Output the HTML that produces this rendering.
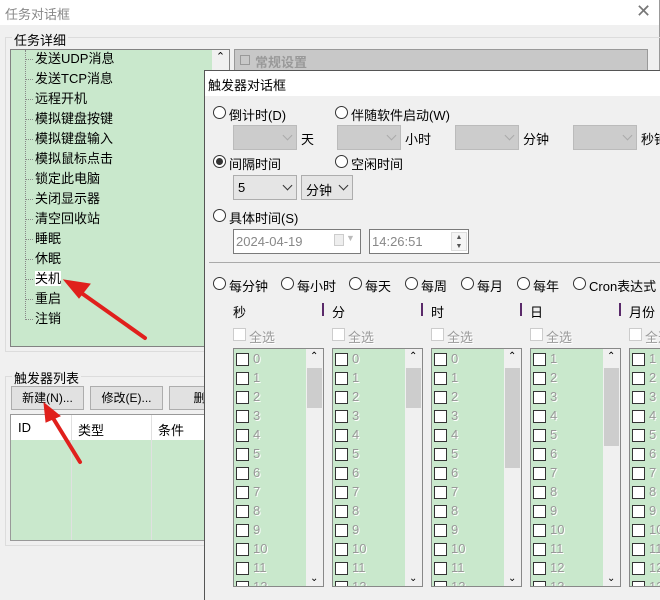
<!DOCTYPE html>
<html><head><meta charset="utf-8"><style>
*{margin:0;padding:0;box-sizing:border-box}
body{width:660px;height:595px;overflow:hidden;background:#f0f0f0;font-family:"Liberation Sans","Noto Sans CJK SC",sans-serif;font-size:12px;color:#000;position:relative}
.a{position:absolute;white-space:nowrap}
.rb{position:absolute;width:13px;height:13px;border:1px solid #333;border-radius:50%;background:#fff}
.rb.on::after{content:"";position:absolute;left:2px;top:2px;width:7px;height:7px;border-radius:50%;background:#333}
.cb{position:absolute;width:13px;height:13px;border:1px solid #333;background:#fff}
.cbd{position:absolute;width:13px;height:13px;border:1px solid #ccc;background:#fff}
.combo{position:absolute;height:25px;border:1px solid #bbb;background:#ccc}
.combo.e{background:#e5e5e5;border-color:#adadad}
.chev{position:absolute;right:5px;top:6px;width:7px;height:7px;border-right:1.3px solid #333;border-bottom:1.3px solid #333;transform:rotate(45deg)}
.combo .chev{border-color:#aaa}
.combo.e .chev{border-color:#333}
.dis{color:#999;text-shadow:1px 1px 0 #fff}
.btn{position:absolute;height:24px;border:1px solid #adadad;background:#e1e1e1;text-align:center;line-height:22px}
.list{position:absolute;top:348px;width:91px;height:239px;border:1px solid #888;background:#c9e8cc;overflow:hidden}
.sb{position:absolute;right:0;top:0;width:17px;height:100%;background:#f0f0f0}
.th{position:absolute;left:1px;width:15px;top:19px;background:#cdcdcd}
.tree div{height:20px;line-height:20px;position:relative;padding-left:35px}
.tree div::before{content:"";position:absolute;left:26px;top:10px;width:7px;border-top:1px dotted #888}
</style></head><body>
<div class="a" style="left:0;top:0;width:660px;height:25px;background:#fff"></div>
<div class="a" style="left:5px;top:4px;color:#888;font-size:13px">任务对话框</div>
<div class="a" style="left:636px;top:1px;color:#777;font-size:18px">✕</div>
<div class="a" style="left:659px;top:0;width:1px;height:595px;background:#999"></div>
<div class="a" style="left:5px;top:37px;width:660px;height:315px;border:1px solid #dcdcdc"></div>
<div class="a" style="left:12px;top:30px;background:#f0f0f0;padding:0 2px;font-size:13px">任务详细</div>
<div class="a" style="left:10px;top:49px;width:220px;height:298px;border:1px solid #828282;background:#c9e8cc"></div>
<div class="a" style="left:212px;top:50px;width:17px;height:20px;background:#f0f0f0;text-align:center;font-size:11px">⌃</div>
<div class="a" style="left:25px;top:50px;width:1px;height:270px;border-left:1px dotted #888"></div>
<div class="a tree" style="left:0;top:49px;font-size:13px">
<div>发送UDP消息</div><div>发送TCP消息</div><div>远程开机</div><div>模拟键盘按键</div><div>模拟键盘输入</div><div>模拟鼠标点击</div><div>锁定此电脑</div><div>关闭显示器</div><div>清空回收站</div><div>睡眠</div><div>休眠</div><div><span style="background:#fff">关机</span></div><div>重启</div><div>注销</div></div>
<div class="a" style="left:234px;top:49px;width:414px;height:22px;border:1px solid #999;background:#c8c8c8"></div>
<div class="a" style="left:240px;top:55px;width:10px;height:10px;border:1px solid #999"></div>
<div class="a" style="left:255px;top:52px;color:#999;font-weight:bold;font-size:13px">常规设置</div>
<div class="a" style="left:5px;top:376px;width:210px;height:170px;border:1px solid #dcdcdc"></div>
<div class="a" style="left:12px;top:368px;background:#f0f0f0;padding:0 2px;font-size:13px">触发器列表</div>
<div class="btn" style="left:11px;top:386px;width:73px">新建(N)...</div>
<div class="btn" style="left:90px;top:386px;width:73px">修改(E)...</div>
<div class="btn" style="left:169px;top:386px;width:73px">删除</div>
<div class="a" style="left:10px;top:414px;width:200px;height:127px;border:1px solid #999;background:#c9e8cc"></div>
<div class="a" style="left:11px;top:415px;width:198px;height:25px;background:#fff"></div>
<div class="a" style="left:71px;top:415px;width:1px;height:125px;background:#e0e0e0"></div>
<div class="a" style="left:151px;top:415px;width:1px;height:125px;background:#e0e0e0"></div>
<div class="a" style="left:18px;top:420px;font-size:13px">ID</div>
<div class="a" style="left:78px;top:420px;font-size:13px">类型</div>
<div class="a" style="left:158px;top:420px;font-size:13px">条件</div>
<div class="a" style="left:204px;top:70px;width:460px;height:530px;background:#f0f0f0;border-left:1px solid #555;border-top:1px solid #555"></div>
<div class="a" style="left:205px;top:71px;width:455px;height:25px;background:#fff"></div>
<div class="a" style="left:208px;top:75px;font-size:13px">触发器对话框</div>
<div class="rb" style="left:213px;top:106px"></div><div class="a" style="left:229px;top:105px;font-size:13px">倒计时(D)</div>
<div class="rb" style="left:335px;top:106px"></div><div class="a" style="left:351px;top:105px;font-size:13px">伴随软件启动(W)</div>
<div class="combo" style="left:233px;top:125px;width:64px"><i class="chev"></i></div><div class="a" style="left:301px;top:129px;font-size:13px">天</div>
<div class="combo" style="left:337px;top:125px;width:64px"><i class="chev"></i></div><div class="a" style="left:405px;top:129px;font-size:13px">小时</div>
<div class="combo" style="left:455px;top:125px;width:64px"><i class="chev"></i></div><div class="a" style="left:523px;top:129px;font-size:13px">分钟</div>
<div class="combo" style="left:573px;top:125px;width:64px"><i class="chev"></i></div><div class="a" style="left:641px;top:129px;font-size:13px">秒钟</div>
<div class="rb on" style="left:213px;top:155px"></div><div class="a" style="left:229px;top:154px;font-size:13px">间隔时间</div>
<div class="rb" style="left:335px;top:155px"></div><div class="a" style="left:351px;top:154px;font-size:13px">空闲时间</div>
<div class="combo e" style="left:233px;top:175px;width:64px"><span class="a" style="left:4px;top:4px;font-size:13px">5</span><i class="chev"></i></div>
<div class="combo e" style="left:301px;top:175px;width:52px"><span class="a" style="left:4px;top:4px;font-size:13px">分钟</span><i class="chev"></i></div>
<div class="rb" style="left:213px;top:209px"></div><div class="a" style="left:229px;top:208px;font-size:13px">具体时间(S)</div>
<div class="a" style="left:233px;top:229px;width:128px;height:25px;border:1px solid #7a7a7a;background:#fff"><span class="a" style="left:2px;top:4px;color:#888;font-size:13px">2024-04-19</span><span class="a" style="left:100px;top:4px;width:10px;height:12px;border:1px solid #ccc;background:#eee"></span><span class="a" style="left:112px;top:3px;color:#bbb;font-size:9px">▼</span></div>
<div class="a" style="left:369px;top:229px;width:100px;height:25px;border:1px solid #7a7a7a;background:#fff"><span class="a" style="left:2px;top:4px;color:#888;font-size:13px">14:26:51</span><span class="a" style="left:81px;top:2px;width:16px;height:19px;border:1px solid #ddd;background:#f5f5f5;font-size:7px;color:#555;text-align:center;line-height:9px">▲<br>▼</span></div>
<div class="a" style="left:209px;top:262px;width:451px;height:1px;background:#aaa"></div>
<div class="rb" style="left:213px;top:277px"></div><div class="a" style="left:229px;top:276px;font-size:13px">每分钟</div>
<div class="rb" style="left:281px;top:277px"></div><div class="a" style="left:297px;top:276px;font-size:13px">每小时</div>
<div class="rb" style="left:349px;top:277px"></div><div class="a" style="left:365px;top:276px;font-size:13px">每天</div>
<div class="rb" style="left:405px;top:277px"></div><div class="a" style="left:421px;top:276px;font-size:13px">每周</div>
<div class="rb" style="left:461px;top:277px"></div><div class="a" style="left:477px;top:276px;font-size:13px">每月</div>
<div class="rb" style="left:517px;top:277px"></div><div class="a" style="left:533px;top:276px;font-size:13px">每年</div>
<div class="rb" style="left:573px;top:277px"></div><div class="a" style="left:589px;top:276px;font-size:13px">Cron表达式</div>
<div class="a" style="left:233px;top:302px;font-size:13px">秒</div>
<div class="a" style="left:322px;top:303px;width:2px;height:13px;background:#5a2a6a"></div><div class="a" style="left:332px;top:302px;font-size:13px">分</div>
<div class="a" style="left:421px;top:303px;width:2px;height:13px;background:#5a2a6a"></div><div class="a" style="left:431px;top:302px;font-size:13px">时</div>
<div class="a" style="left:520px;top:303px;width:2px;height:13px;background:#5a2a6a"></div><div class="a" style="left:530px;top:302px;font-size:13px">日</div>
<div class="a" style="left:619px;top:303px;width:2px;height:13px;background:#5a2a6a"></div><div class="a" style="left:629px;top:302px;font-size:13px">月份</div>
<div class="cbd" style="left:233px;top:328px"></div><div class="a dis" style="left:249px;top:327px;font-size:13px">全选</div>
<div class="cbd" style="left:332px;top:328px"></div><div class="a dis" style="left:348px;top:327px;font-size:13px">全选</div>
<div class="cbd" style="left:431px;top:328px"></div><div class="a dis" style="left:447px;top:327px;font-size:13px">全选</div>
<div class="cbd" style="left:530px;top:328px"></div><div class="a dis" style="left:546px;top:327px;font-size:13px">全选</div>
<div class="cbd" style="left:629px;top:328px"></div><div class="a dis" style="left:645px;top:327px;font-size:13px">全选</div>
<div id="lists"></div>
<svg class="a" style="left:0;top:0" width="660" height="595">
<g stroke="#e0201c" stroke-width="4" fill="#e0201c" stroke-linecap="round">
<line x1="145" y1="338" x2="80" y2="292"/>
<polygon points="64,280 90,284 79,298" stroke-width="1"/>
<line x1="80" y1="462" x2="53" y2="418"/>
<polygon points="44,403 60,416 46,422" stroke-width="1"/>
</g></svg>
<script>
var cols=[[233,0,[367,407]],[332,0,[367,407]],[431,0,[367,467]],[530,1,[367,445]],[629,1,[367,407]]];
var h='';
cols.forEach(function(c){
 h+='<div class="list" style="left:'+c[0]+'px">';
 for(var i=0;i<13;i++){var y=4+i*19;h+='<div class="cb" style="left:2px;top:'+y+'px"></div><div class="a dis" style="left:19px;top:'+(y-2)+'px;font-size:13px">'+(i+c[1])+'</div>';}
 if(c[0]<600){h+='<div class="sb"><div class="a" style="left:4px;top:2px;font-size:10px">⌃</div><div class="th" style="top:'+(c[2][0]-348)+'px;height:'+(c[2][1]-c[2][0])+'px"></div><div class="a" style="left:4px;bottom:2px;font-size:10px">⌄</div></div>';}
 h+='</div>';});
document.getElementById('lists').innerHTML=h;
</script>
</body></html>
